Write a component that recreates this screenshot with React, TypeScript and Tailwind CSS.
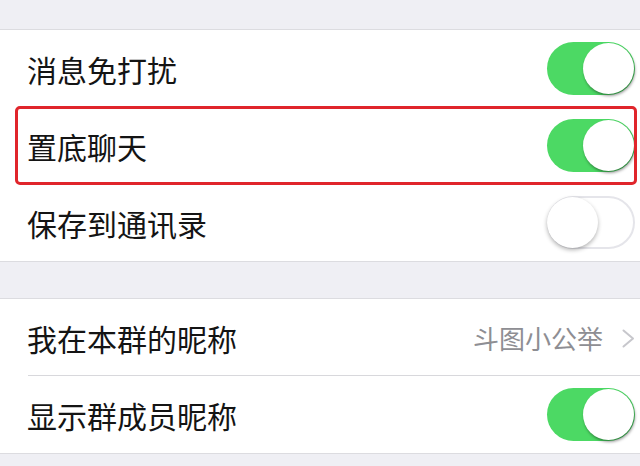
const font = { fontFamily: '"Noto Sans CJK SC", "Noto Sans", sans-serif' };

function Toggle({ on }: { on: boolean }) {
  return on ? (
    <span className="relative flex h-[53px] w-[88px] shrink-0 items-center justify-end rounded-full bg-[#4cd964] p-[1px]">
      <span className="h-[51px] w-[51px] rounded-full bg-white shadow-[1px_2px_3px_rgba(0,0,0,0.4)]" />
    </span>
  ) : (
    <span className="relative flex h-[53px] w-[88px] shrink-0 items-center justify-start rounded-full border-[2px] border-[#e5e5ea] bg-white">
      <span className="-ml-[2px] h-[51px] w-[51px] rounded-full bg-white shadow-[0_2px_4px_rgba(0,0,0,0.3)]" />
    </span>
  );
}

function Row({
  label,
  children,
  divider,
}: {
  label: string;
  children: React.ReactNode;
  divider?: boolean;
}) {
  return (
    <div className="relative flex h-[77px] items-center justify-between pl-[27px] pr-[5px]">
      <span className="text-[30px] leading-none text-[#141414]">{label}</span>
      {children}
      {divider ? <span className="absolute bottom-0 left-[28px] right-0 h-px bg-[#d8d8dc]" /> : null}
    </div>
  );
}

export default function App() {
  return (
    <div className="h-[466px] w-[640px] overflow-hidden bg-[#efeff4]" style={font}>
      <div className="h-[29px]" />

      {/* group 1 */}
      <div className="border-y border-[#dcdce0] bg-white">
        <Row label="消息免打扰">
          <Toggle on />
        </Row>
        <div className="relative">
          <Row label="置底聊天">
            <Toggle on />
          </Row>
          {/* annotation box */}
          <span className="pointer-events-none absolute -top-[1px] left-[15px] right-[3px] -bottom-[1px] rounded-[5px] border-[3px] border-[#e0252b]" />
        </div>
        <Row label="保存到通讯录">
          <Toggle on={false} />
        </Row>
      </div>

      <div className="h-[36px]" />

      {/* group 2 */}
      <div className="border-y border-[#dcdce0] bg-white">
        <Row label="我在本群的昵称" divider>
          <span className="flex items-center gap-[19px] text-[26px] leading-none text-[#8e8e93]">
            斗图小公举
            <svg width="13" height="19" viewBox="0 0 13 19" fill="none" className="mt-[2px]">
              <polyline points="1.5,1.5 11,9.5 1.5,17.5" stroke="#c7c7cc" strokeWidth="2" strokeLinecap="round" strokeLinejoin="round" />
            </svg>
          </span>
        </Row>
        <Row label="显示群成员昵称">
          <Toggle on />
        </Row>
      </div>
    </div>
  );
}
